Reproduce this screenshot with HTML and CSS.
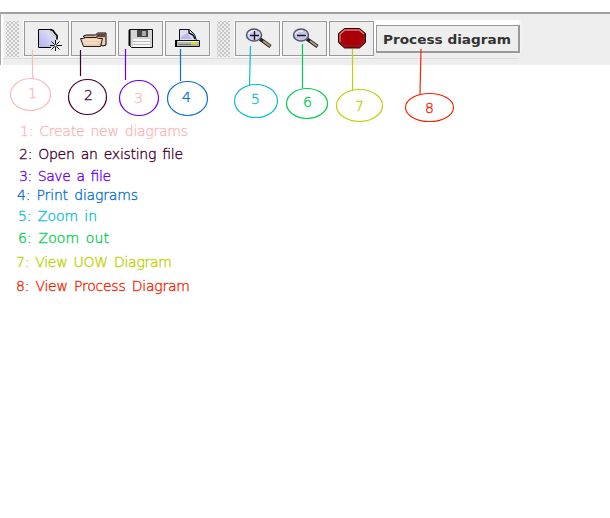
FILE: index.html
```
<!DOCTYPE html>
<html lang="en">
<head>
<meta charset="utf-8">
<title>Diagram toolbar</title>
<link rel="stylesheet" href="styles.css">
</head>
<body>
<header class="toolbar">
  <div class="grip"></div>
  <div class="group group-file">
    <button class="tool" aria-label="Create new diagrams"><svg viewBox="25 22 43 33">
      <defs><linearGradient id="paper" x1="1" y1="0" x2="0" y2="1"><stop stop-color="#f1f0ff"/><stop offset="1" stop-color="#b0b0e6"/></linearGradient></defs>
      <path d="M38.5 29.5H50.5L57.5 37V47.5H38.5Z" fill="url(#paper)"/><path d="M51 47.5H38.5V29.5H52" fill="none" stroke="#000"/><path d="M50 29.5l3 1 2 3 2 2v4" fill="none" stroke="#000" stroke-width="1.7"/><path d="M50.5 31l2 4 4 2" fill="#eef" stroke="#99a" stroke-width=".6"/><path d="M50 45.5h12M55.5 40v11M51.5 41.5l8 8M59.5 41.5l-8 8" fill="none" stroke="#111"/><path d="M54.5 45.5h2" stroke="#fff" stroke-width="2"/>
    </svg></button>
    <button class="tool" aria-label="Open an existing file"><svg viewBox="72 22 43 33">
      <path d="M83.5 37V36l3-1h9l2-2h8.500v12l-3 1z" fill="#d9b9a3" stroke="#000"/><path d="M97 34h8v3h-9z" fill="#684342"/><path d="M102 38h3v7h-3z" fill="#ead0bb"/><path d="M80.500 38.500h3l2-1h11l2 1h4l-2 8H83.500z" fill="#edcbb1" stroke="#271916"/><path d="M83 40h17M84 43h14" stroke="#fff1e5"/>
    </svg></button>
    <button class="tool" aria-label="Save a file"><svg viewBox="119 22 43 33">
      <path d="M129.500 29.500h23v18h-21l-2-2z" fill="#d5d5d5" stroke="#111"/><path d="M129.500 30v16" stroke="#000" stroke-width="2"/><path d="M137 30h11v7h-11z" fill="#454545"/><path d="M142 31h4v5h-4z" fill="#aaa"/><path d="M133 39h17v8h-17z" fill="#f7f7f7"/><path d="M133 41.500h17M133 44.500h17" stroke="#bbb"/>
    </svg></button>
    <button class="tool" aria-label="Print diagrams"><svg viewBox="166 22 43 33">
      <path d="M179.500 29.500h10l5 5 2 6h-17z" fill="#ddddfa" stroke="#111"/><path d="M189 30v3l4 2 2 4" fill="none" stroke="#111" stroke-width="1.400"/><path d="M181 37l6-4 5 6h-11z" fill="#bbbbe4"/><path d="M176.500 40.500h23v6h-23z" fill="#b5b5ac" stroke="#111"/><path d="M176 40v7" stroke="#000" stroke-width="2"/><path d="M178 41.500h21" stroke="#eee"/><path d="M191 42h6v2h-6z" fill="#d5e50d"/><path d="M179 44.500h12" stroke="#777"/>
    </svg></button>
  </div>
  <div class="grip grip-second"></div>
  <div class="group group-view">
    <button class="tool" aria-label="Zoom in"><svg viewBox="236 22 43 33">
      <path d="M260 39l10.500 7.500" stroke="#24201f" stroke-width="3.600"/><path d="M263 41l7 5" stroke="#b39a7b" stroke-width="2"/><ellipse cx="254" cy="35" rx="7.500" ry="6" fill="#d0d1ee" stroke="#55556a" stroke-width="1.500"/><path d="M248 34q3-4 8-3" stroke="#fff" fill="none"/><path d="M250 35.500h9M254.500 31v9" stroke="#171725" stroke-width="1.400"/>
    </svg></button>
    <button class="tool" aria-label="Zoom out"><svg viewBox="283 22 43 33">
      <path d="M307 39l10.500 7.500" stroke="#24201f" stroke-width="3.600"/><path d="M310 41l7 5" stroke="#b39a7b" stroke-width="2"/><ellipse cx="301" cy="35" rx="7.500" ry="6" fill="#c5c6e5" stroke="#55556a" stroke-width="1.500"/><path d="M295 34q3-4 8-3" stroke="#fff" fill="none"/><path d="M297 35.500h9" stroke="#171725" stroke-width="1.500"/>
    </svg></button>
    <button class="tool" aria-label="View UOW Diagram"><svg viewBox="330 22 43 33">
      <path d="M344.500 28.500h15l6 5v9l-6 5.500h-15l-6-5.500v-9z" fill="#a90008" stroke="#250506"/><path d="M340 42v-8l5-4h14l5 4" fill="none" stroke="#d77b7b" stroke-width="1.300"/><path d="M340 42l5 4h14l5-4v-8" fill="none" stroke="#8b2930"/>
    </svg></button>
  </div>
  <div class="process-area"><button class="process"><svg viewBox="0 0 140 24"><text x="6" y="17" textLength="128" lengthAdjust="spacingAndGlyphs">Process diagram</text></svg></button></div>
</header>
<ol class="legend">
  <li class="pink one"><svg><text x="0" y="14" textLength="168">1: Create new diagrams</text></svg></li>
  <li class="plum two"><svg><text x="0" y="14" textLength="164">2: Open an existing file</text></svg></li>
  <li class="violet three"><svg><text x="0" y="14" textLength="92">3: Save a file</text></svg></li>
  <li class="blue four"><svg><text x="0" y="14" textLength="121">4: Print diagrams</text></svg></li>
  <li class="cyan five"><svg><text x="0" y="14" textLength="79">5: Zoom in</text></svg></li>
  <li class="green six"><svg><text x="0" y="14" textLength="91">6: Zoom out</text></svg></li>
  <li class="lime seven"><svg><text x="0" y="14" textLength="156">7: View UOW Diagram</text></svg></li>
  <li class="red eight"><svg><text x="0" y="14" textLength="174">8: View Process Diagram</text></svg></li>
</ol>
<svg class="callouts" viewBox="0 0 610 518">
  <g class="pink"><path d="M32.500 50v26l1 3"/><ellipse cx="30.500" cy="94.500" rx="20" ry="16"/><text x="28" y="98">1</text></g>
  <g class="plum"><path d="M80.500 50v26"/><ellipse cx="87.500" cy="97" rx="19" ry="17.500"/><text x="84" y="100">2</text></g>
  <g class="violet"><path d="M125.500 49v31"/><ellipse cx="139" cy="98" rx="19.500" ry="17.500"/><text class="pink" x="134" y="103">3</text></g>
  <g class="blue"><path d="M180.500 49v32"/><ellipse cx="187.500" cy="98.500" rx="20" ry="17"/><text x="182" y="102">4</text></g>
  <g class="cyan"><path d="M250.500 46l-1 39"/><ellipse cx="256" cy="101" rx="21.500" ry="16.500"/><text x="251" y="104">5</text></g>
  <g class="green"><path d="M302.500 44v44"/><ellipse cx="307" cy="103.500" rx="20.500" ry="15"/><text x="303" y="107">6</text></g>
  <g class="lime"><path d="M352.500 49v41"/><ellipse cx="359.500" cy="105.500" rx="23" ry="16"/><text x="355" y="111">7</text></g>
  <g class="red"><path d="M421 49l-1 45"/><ellipse cx="429.500" cy="107.500" rx="24" ry="14"/><text x="425" y="113">8</text></g>
</svg>
</body>
</html>
```
FILE: styles.css
```
* { box-sizing: border-box; }
body { margin: 0; height: 518px; position: relative; overflow: hidden; background: #fff; font: 13px "DejaVu Sans", sans-serif; }
body::before { content: ""; display: table; }
.toolbar { display: flex; height: 53px; margin-top: 12px; padding: 8px 0 0 5px; background: linear-gradient(#eee 0 44px, #ddd 44px 45px, #eee 45px) 2px 0 / 516px 100% no-repeat, linear-gradient(#eee, #eee) 2px 0 no-repeat; border-top: 2px solid #a0a0a0; border-left: 1px solid #aaa; }
.grip { width: 13px; height: 36px; margin-top: -1px; background-image: radial-gradient(circle, #999 .6px, transparent .8px), radial-gradient(circle, #999 .6px, transparent .8px); background-size: 4px 4px; background-position: 0 0, 2px 2px; }
.group { display: flex; gap: 2px; height: 36px; margin-top: -1px; }
.group-file { margin-left: 5px; }
.grip-second { margin-left: 7px; }
.group-view { margin-left: 5px; }
.tool { display: block; width: 45px; height: 35px; padding: 0; border: 1px solid #999; background: #eee; box-shadow: 0 0 0 1px #fafafa; }
.tool svg { display: block; width: 43px; height: 33px; }
.process-area { width: 148px; height: 38px; background: #fff; margin-top: -2px; padding: 5px 2px; box-shadow: inset -2px -6px 3px #eee; }
.process { display: block; width: 144px; height: 28px; padding: 0; border: 2px solid #999; border-top-width: 1px; border-left-width: 1px; background: #eee; }
.process svg { display: block; width: 140px; height: 24px; }
.process text { font: bold 13px "DejaVu Sans", sans-serif; fill: #333; stroke: none; }
.legend { list-style: none; margin: 57px 0 0 16px; padding: 0; display: flex; flex-direction: column; }
.legend li { height: 22px; }
.legend svg { display: block; width: 230px; height: 19px; overflow: visible; }
.legend text, .callouts text { font-size: 14px; font-weight: 200; word-spacing: 2px; stroke: currentColor; stroke-width: .35px; fill: currentColor; }
.legend .one { height: 23px; padding-left: 4px; }
.legend .two { padding-left: 3px; }
.legend .three { height: 19px; padding-left: 3px; }
.legend .four { height: 21px; padding-left: 1px; }
.legend .five { padding-left: 2px; }
.legend .six { height: 24px; padding-left: 2px; }
.legend .seven { height: 24px; }
.callouts { position: absolute; left: 0; top: 0; width: 610px; height: 518px; pointer-events: none; }
.callouts path, .callouts ellipse { fill: none; stroke: currentColor; stroke-width: 1.2; }
.pink { color: #f9b9bd; }
.plum { color: #42002f; }
.violet { color: #6d00ef; }
.blue { color: #0872d0; }
.cyan { color: #08bdce; }
.green { color: #00cb50; }
.lime { color: #bed000; }
.red { color: #f52400; }
```
